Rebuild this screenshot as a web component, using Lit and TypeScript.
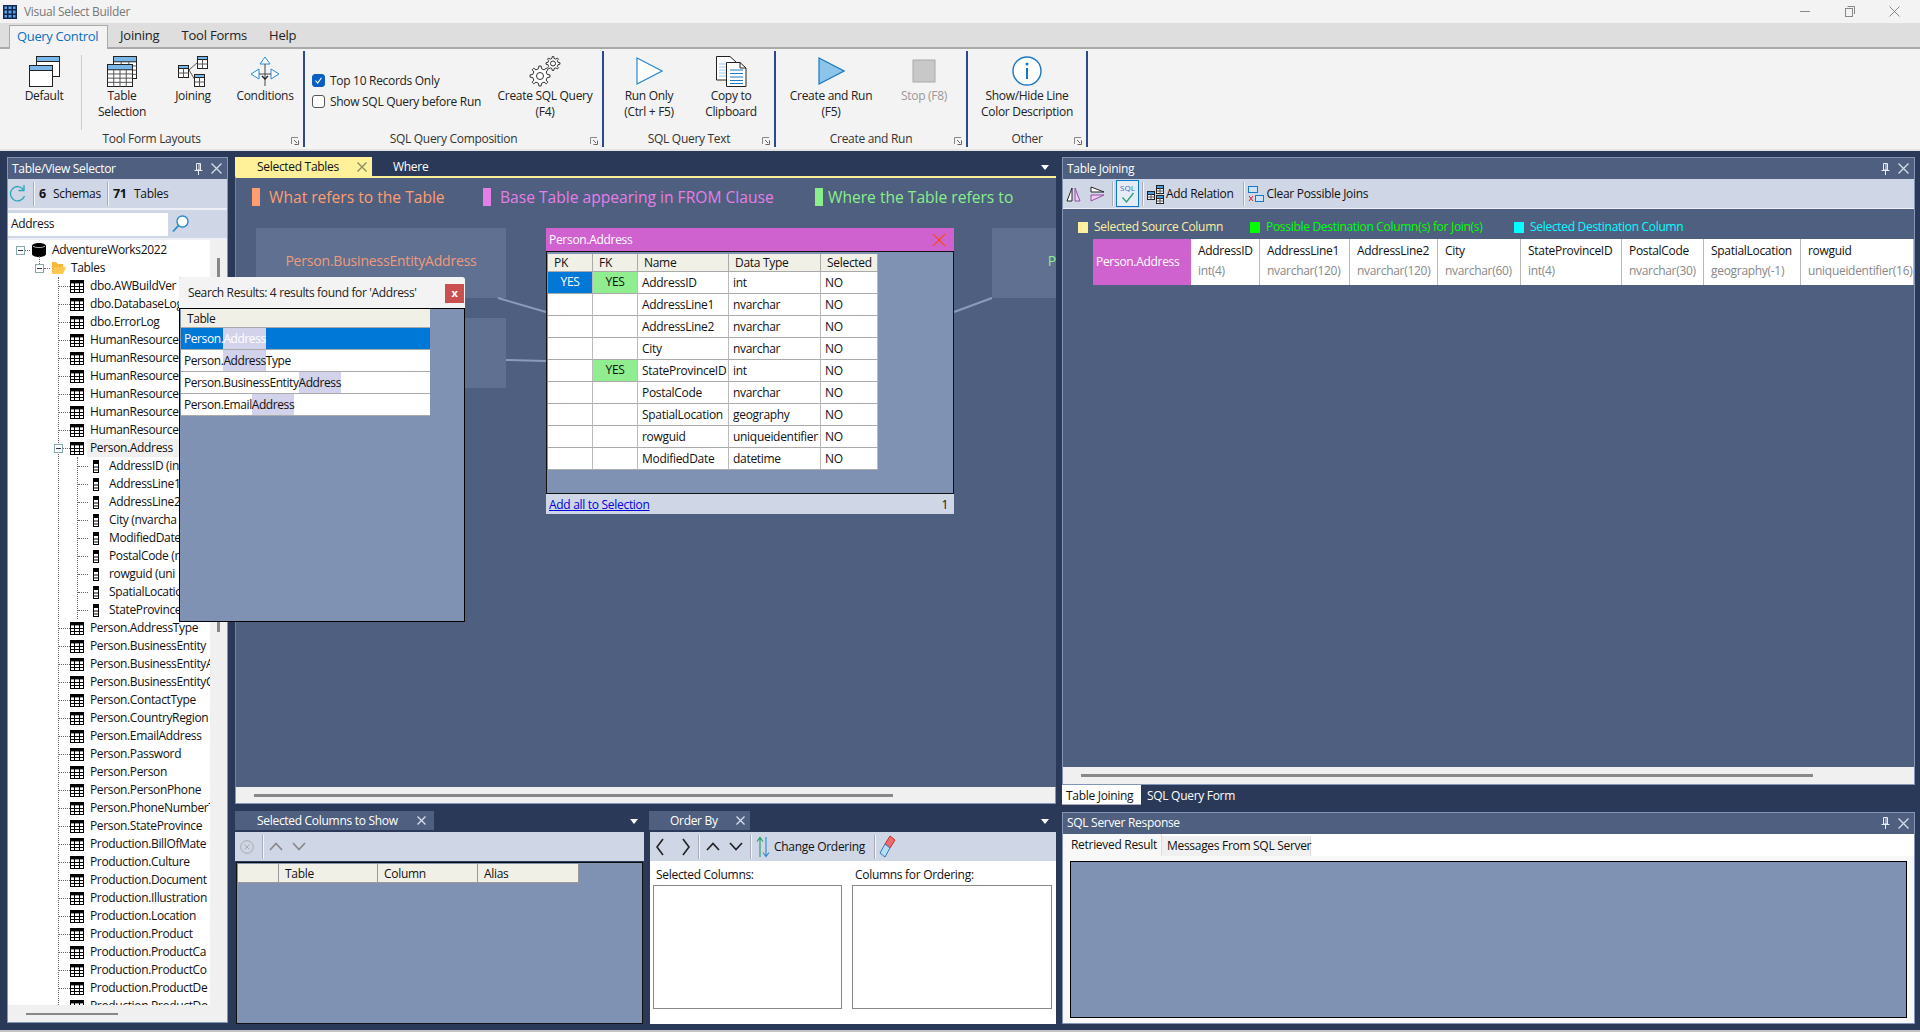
import { LitElement, html, svg, css } from "lit";
import { customElement } from "lit/decorators.js";

const gear = (cx: number, cy: number, r: number, n = 8) => {
  const pts: string[] = [];
  const step = (Math.PI * 2) / n;
  for (let i = 0; i < n; i++) {
    const a = i * step;
    const w = step * 0.2;
    const ri = r * 0.74;
    const p = (ang: number, rad: number) => `${(cx + Math.cos(ang) * rad).toFixed(2)} ${(cy + Math.sin(ang) * rad).toFixed(2)}`;
    pts.push(p(a - w * 1.3, ri), p(a - w * 0.7, r), p(a + w * 0.7, r), p(a + w * 1.3, ri));
  }
  return "M" + pts.join("L") + "Z";
};

const mini = (x: number, y: number, w: number, h: number, head = "#7ab6e8", cols = 2, rows = 2) => {
  const cw = w / cols;
  const hh = Math.max(3, h * 0.24);
  const rh = (h - hh) / rows;
  const lines: any[] = [];
  for (let i = 1; i < cols; i++) lines.push(svg`<path d="M${x + cw * i} ${y + hh}V${y + h}" stroke="#555" fill="none" />`);
  for (let i = 1; i < rows; i++) lines.push(svg`<path d="M${x} ${y + hh + rh * i}H${x + w}" stroke="#555" fill="none" />`);
  return svg`<rect x=${x} y=${y} width=${w} height=${h} fill="#fff" stroke="#222" /><rect x=${x} y=${y} width=${w} height=${hh} fill=${head} stroke="#222" />${lines}`;
};

const ico = (w: number, h: number, body: any) => html`<svg class="svg" width=${w} height=${h} viewBox="0 0 ${w} ${h}">${body}</svg>`;

const tableIcon = ico(14, 13, svg`<rect x=".5" y=".5" width="13" height="12" fill="#fff" stroke="#000" /><rect x="0" y="0" width="14" height="3.4" fill="#000" /><path d="M0 6.5H14M0 9.5H14M4.5 3V13M9.5 3V13" stroke="#000" fill="none" />`);
const colIcon = ico(6, 13, svg`<rect x=".5" y=".5" width="5" height="12" fill="#fff" stroke="#000" /><rect x="0" y="0" width="6" height="4" fill="#000" /><path d="M0 7H6M0 10H6" stroke="#000" fill="none" />`);
const dbIcon = ico(14, 14, svg`<path d="M0 3C0 -1 14 -1 14 3V11C14 15 0 15 0 11Z" fill="#000" /><path d="M1 3.2C3 5 11 5 13 3.2" stroke="#fff" fill="none" stroke-width=".7" />`);
const folderIcon = ico(15, 14, svg`<path d="M1 1H5L7 3H12V6H4L1 13Z" fill="#f5b73c" /><path d="M1 13L4 6H15L12 13Z" fill="#fcc74e" />`);
const pinIcon = ico(9, 12, svg`<path d="M2.5 .5H6.5V7H2.5ZM.5 7.5H8.5M4.5 8V12M5 1V7" stroke="#e8ecf4" fill="none" />`);
const closeIcon = (c = "#e8ecf4", s = 10) => ico(s, s, svg`<path d="M.5 .5L${s - 0.5} ${s - 0.5}M${s - 0.5} .5L.5 ${s - 0.5}" stroke=${c} stroke-width="1.3" fill="none" />`);
const launcher = ico(8, 8, svg`<path d="M.5 7V.5H7" stroke="#888" fill="none" /><path d="M3 3L6 6M7.5 3.5V7.5H3.5" stroke="#666" fill="none" />`);
const chevUp = (c: string) => ico(14, 9, svg`<path d="M1 8L7 1.5L13 8" stroke=${c} stroke-width="1.7" fill="none" />`);
const chevDown = (c: string) => ico(14, 9, svg`<path d="M1 1L7 7.5L13 1" stroke=${c} stroke-width="1.7" fill="none" />`);
const chevL = ico(9, 18, svg`<path d="M8 1L2 9L8 17" stroke="#222" stroke-width="1.6" fill="none" />`);
const chevR = ico(9, 18, svg`<path d="M1 1L7 9L1 17" stroke="#222" stroke-width="1.6" fill="none" />`);

const TABLES_A = ["dbo.AWBuildVer", "dbo.DatabaseLog", "dbo.ErrorLog", "HumanResource", "HumanResource", "HumanResource", "HumanResource", "HumanResource", "HumanResource"];
const COLS = ["AddressID (in", "AddressLine1", "AddressLine2", "City (nvarcha", "ModifiedDate", "PostalCode (r", "rowguid (uni", "SpatialLocatio", "StateProvince"];
const TABLES_B = ["Person.AddressType", "Person.BusinessEntity", "Person.BusinessEntityA", "Person.BusinessEntityC", "Person.ContactType", "Person.CountryRegion", "Person.EmailAddress", "Person.Password", "Person.Person", "Person.PersonPhone", "Person.PhoneNumberT", "Person.StateProvince", "Production.BillOfMate", "Production.Culture", "Production.Document", "Production.Illustration", "Production.Location", "Production.Product", "Production.ProductCa", "Production.ProductCo", "Production.ProductDe", "Production.ProductDo"];
const GRID = [
  ["YES", "YES", "AddressID", "int"],
  ["", "", "AddressLine1", "nvarchar"],
  ["", "", "AddressLine2", "nvarchar"],
  ["", "", "City", "nvarchar"],
  ["", "YES", "StateProvinceID", "int"],
  ["", "", "PostalCode", "nvarchar"],
  ["", "", "SpatialLocation", "geography"],
  ["", "", "rowguid", "uniqueidentifier"],
  ["", "", "ModifiedDate", "datetime"],
];
const JOIN = [["AddressID", "int(4)"], ["AddressLine1", "nvarchar(120)"], ["AddressLine2", "nvarchar(120)"], ["City", "nvarchar(60)"], ["StateProvinceID", "int(4)"], ["PostalCode", "nvarchar(30)"], ["SpatialLocation", "geography(-1)"], ["rowguid", "uniqueidentifier(16)"]];
const RESULTS = [["Person.", "Address", ""], ["Person.", "Address", "Type"], ["Person.BusinessEntity", "Address", ""], ["Person.Email", "Address", ""]];

@customElement("app-root")
export class AppRoot extends LitElement {
  static styles = css`
    :host { display: block; position: relative; width: 1920px; height: 1032px; overflow: hidden; background: #2a3957; font-family: "Open Sans", "Noto Sans", sans-serif; font-size: 12px; letter-spacing: -0.3px; color: #111; line-height: 16px; }
    * { box-sizing: border-box; }
    .svg { display: block; flex: none; }

    .title { height: 23px; background: #f3f3f3; display: flex; align-items: center; padding-left: 3px; color: #777; }
    .title .app { margin-right: 7px; }
    .winbtns { margin-left: auto; display: flex; padding-right: 3px; }
    .winbtns span { width: 45px; display: flex; justify-content: center; }

    .rtabs { height: 26px; background: #dedede; border-bottom: 2px solid #aaa; padding: 2px 0 0 9px; display: flex; font-size: 13px; letter-spacing: -0.2px; }
    .rtab { padding: 0 11px; height: 24px; line-height: 21px; color: #222; }
    .rtab.on { width: 99px; padding: 0 0 0 7px; background: #f3f3f3; border: 1px solid #aaa; border-bottom: none; color: #0a6fc2; margin-right: 1px; white-space: nowrap; letter-spacing: -0.35px; }

    .ribbon { height: 102px; background: #f3f3f3; border-bottom: 2px solid #e4e4e4; display: grid; grid-template-columns: 305px 299px 172px 192px 120px; padding-top: 2px; }
    .group { height: 96px; border-right: 2px solid #2a4a8a; display: flex; flex-direction: column; }
    .items { height: 79px; display: grid; }
    .g1 .items { grid-template-columns: 74px 1px 80px 62px 82px; padding-left: 7px; }
    .g2 .items { grid-template-columns: 178px 110px; padding-left: 7px; }
    .g3 .items { grid-template-columns: 90px 74px; }
    .g4 .items { grid-template-columns: 110px 76px; }
    .g5 .items { grid-template-columns: 118px; }
    .glabel { height: 17px; display: grid; grid-template-columns: 1fr auto 1fr; align-items: center; color: #333; }
    .glabel .svg { justify-self: end; margin-right: 4px; margin-top: 4px; grid-column: 3; }
    .glabel span { grid-column: 2; }
    .vsep { background: #ccc; height: 75px; margin-top: 4px; }
    .big { display: flex; flex-direction: column; align-items: center; padding-top: 5px; text-align: center; color: #222; white-space: pre-line; }
    .big .svg { margin-bottom: 1px; }
    .big.dis { color: #999; }
    .checks { padding-top: 19px; }
    .check { height: 21px; display: flex; align-items: center; gap: 5px; color: #222; }
    .box { width: 13px; height: 13px; border-radius: 3px; border: 1px solid #555; background: #fff; flex: none; }
    .box.on { background: #0a5fc0; border-color: #0a5fc0; display: flex; align-items: center; justify-content: center; }

    .work { display: grid; grid-template-columns: 221px 828px 859px; height: 879px; padding: 6px 0 0 7px; }
    .left { height: 866px; }
    .panel { border: 1px solid #8496b8; background: #4e5f80; display: flex; flex-direction: column; }
    .phead { height: 21px; background: #4e5f80; color: #fff; display: flex; align-items: center; padding: 0 5px 0 4px; flex: none; }
    .phead .pin { margin-left: auto; margin-right: 8px; }
    .tb { background: #cfd6e6; display: flex; align-items: center; flex: none; }
    .tdiv { width: 1px; background: #f5f6fa; box-shadow: -1px 0 0 #aab; height: 24px; flex: none; }

    .left .tb1 { padding-left: 1px; border-bottom: 2px solid #eef0f6; height: 31px; }
    .tb1 .tdiv { margin: 0 4px 0 8px; }
    .tb1 b { width: 14px; font-size: 12.5px; }
    .tb1 .n2 { width: 21px; }
    .tb1 .lab { width: 55px; }
    .tb1 .tdiv.d2 { margin: 0 4px 0 0; }
    .search { height: 30px; background: #cfd6e6; display: flex; align-items: center; flex: none; border-bottom: 2px solid #eef0f6; }
    .search .inp { width: 160px; height: 23px; background: #fff; padding-left: 3px; line-height: 22px; }
    .search .svg { margin-left: 4px; }

    .treewrap { flex: 1; display: flex; min-height: 0; background: #f0f0f0; }
    .tree { width: 202px; background: #fff; overflow: hidden; height: 766px; flex: none; padding: 1px 0 0 8px; letter-spacing: -0.35px; }
    .vtrack { flex: 1; position: relative; }
    .vthumb { width: 3px; height: 374px; background: #888; margin: 18px 0 0 7px; }
    .hscroll { height: 17px; background: #f0f0f0; padding-left: 18px; display: flex; align-items: center; flex: none; }
    .hthumb { height: 2px; background: #888; flex: none; }
    .row { height: 18px; display: flex; align-items: center; white-space: nowrap; }
    .exp { width: 9px; height: 9px; border: 1px solid #8aa; background: #fff; flex: none; position: relative; }
    .exp::after { content: ""; position: absolute; left: 1px; right: 1px; top: 3px; height: 1px; background: #334; }
    .dots { height: 0; border-bottom: 1px dotted #666; flex: none; }
    .r0 .dots { width: 5px; }
    .r0 .svg { margin-left: 2px; }
    .r0 .t { margin-left: 6px; }
    .r1 { margin-left: 19px; }
    .r1 .dots { width: 6px; }
    .r1 .svg { margin-left: 1px; }
    .r1 .t { margin-left: 5px; }
    .r1 .exp::before { content: ""; position: absolute; left: 3px; top: -9px; height: 8px; border-left: 1px dotted #666; }
    .l2 { margin-left: 42px; border-left: 1px dotted #666; }
    .l2 > .row > .dots { width: 11px; }
    .l2 > .row .t { margin-left: 3px; padding: 0 3px; line-height: 18px; }
    .l2 > .row.pa .exp { margin-left: -5px; }
    .l2 > .row.pa .dots { width: 7px; }
    .l2 > .row.pa .t { background: #f0f0f0; padding-right: 6px; }
    .l2 > .row.under .t { max-width: 92px; overflow: hidden; }
    .l3 { margin-left: 18px; border-left: 1px dotted #666; height: 162px; }
    .l3 .dots { width: 10px; }
    .l3 .svg { margin-left: 5px; }
    .l3 .t { margin-left: 10px; max-width: 70px; overflow: hidden; }

    .center { display: flex; flex-direction: column; margin-left: 7px; width: 821px; }
    .right { display: flex; flex-direction: column; margin-left: 6px; width: 853px; }
    .dtabs { height: 19px; display: flex; align-items: stretch; flex: none; }
    .dtab { display: flex; align-items: center; color: #fff; white-space: nowrap; }
    .dtab.y { background: #fff09a; color: #111; width: 137px; padding-left: 22px; }
    .dtab.y .svg { margin-left: 18px; }
    .dtab.where { padding-left: 21px; }
    .dtab.s { background: #4e5f80; }
    .dtab.sc { width: 199px; padding-left: 22px; }
    .dtab.sc .svg { margin-left: 19px; }
    .dtab.ob { width: 101px; padding-left: 21px; }
    .dtab.ob .svg { margin-left: 18px; }
    .tri { margin-left: auto; margin-right: 7px; align-self: center; width: 0; height: 0; border: 4px solid transparent; border-top: 5px solid #fff; margin-top: 5px; }
    .tri.wide { margin-right: 11px; }
    .canvas { position: relative; height: 611px; background: #4e5f80; overflow: hidden; border-top: 2px solid #fff09a; flex: none; border-left: 1px solid #6f81a3; }
    .lg { position: absolute; top: 10px; display: flex; align-items: center; gap: 9px; height: 18px; font-size: 15.6px; letter-spacing: 0; white-space: nowrap; }
    .lg .sw { width: 8px; height: 18px; flex: none; }
    .ghost { position: absolute; background: #5f7090; display: flex; align-items: center; justify-content: center; font-size: 14px; letter-spacing: -0.2px; overflow: hidden; white-space: nowrap; padding-bottom: 4px; }
    .wires { position: absolute; inset: 0; }
    .node { position: absolute; left: 310px; top: 50px; width: 408px; height: 286px; display: flex; flex-direction: column; }
    .ntitle { height: 23px; background: #cf62cf; color: #fff; display: flex; align-items: center; padding: 0 8px 0 3px; flex: none; justify-content: space-between; }
    .nbody { height: 243px; background: #8092b3; border: 1px solid #111; padding: 2px 0 0 1px; flex: none; }
    .nfoot { height: 20px; background: #cfd6e6; display: flex; align-items: center; padding: 1px 6px 0 3px; justify-content: space-between; flex: none; }
    .nfoot a { color: #0000e0; text-decoration: underline; }
    .dg { display: grid; grid-template-columns: 45px 45px 91px 92px 57px; width: 330px; }
    .dh { height: 18px; background: #f1f0e7; border-right: 1px solid #aaa; border-bottom: 1px solid #aaa; padding-left: 6px; line-height: 17px; white-space: nowrap; }
    .dc { height: 22px; background: #fff; border-right: 1px solid #bbb; border-bottom: 1px solid #aaa; padding-left: 4px; line-height: 21px; white-space: nowrap; overflow: hidden; }
    .dc.c { padding-left: 0; text-align: center; line-height: 19px; }
    .dc.pk { background: #0078d7; color: #fff; }
    .dc.fk { background: #90ee90; }

    .strip { height: 17px; background: #f0f0f0; padding-left: 18px; display: flex; align-items: center; flex: none; border: 1px solid #8496b8; border-top: none; }
    .bottomrow { display: flex; margin-top: 7px; height: 213px; }
    .bl { width: 414px; display: flex; flex-direction: column; }
    .br { width: 407px; display: flex; flex-direction: column; }
    .bl .tb2, .br .tb2 { height: 29px; margin-top: 2px; }
    .bl .tb2 { width: 409px; }
    .br .tb2 { width: 406px; margin-left: 1px; }
    .tb2 { padding-left: 5px; }
    .sgrid { margin: 1px 0 0 1px; width: 407px; height: 162px; border: 1px solid #111; background: #8092b3; padding: 1px 0 0 1px; }
    .sh { display: grid; grid-template-columns: 41px 99px 100px 101px; width: 341px; height: 19px; background: #f1f0e7; border-bottom: 1px solid #999; }
    .sh div { border-right: 1px solid #999; padding-left: 6px; line-height: 20px; }
    .obbody { margin-left: 1px; width: 406px; flex: 1; background: #fff; padding: 6px 3px 0 3px; display: grid; grid-template-columns: 189px 200px; column-gap: 10px; grid-template-rows: 18px 124px; align-content: start; color: #111; }
    .obbody .lab { padding-left: 3px; line-height: 16px; }
    .obbody .list { border: 1px solid #888; background: #fff; }

    .rbody { flex: 1; background: #4e5f80; overflow: hidden; }
    .jlegend { display: flex; height: 18px; margin: 9px 0 3px 15px; align-items: center; }
    .jl { display: flex; align-items: center; gap: 6px; white-space: nowrap; }
    .jl .sw { width: 10px; height: 11px; flex: none; }
    .jl.a { width: 172px; color: #fff0a0; } .jl.a .sw { background: #fff0a0; }
    .jl.b { width: 264px; color: #00ff00; } .jl.b .sw { background: #00ff00; }
    .jl.c { color: #00ffff; } .jl.c .sw { background: #00ffff; }
    .jg { margin-left: 30px; display: grid; grid-template-columns: 98px 69px 90px 88px 83px 101px 82px 97px 1fr; height: 44px; background: #fff; border-bottom: 1px solid #bbb; }
    .jg > div { border-right: 1px solid #bbb; background: #fff; padding-left: 7px; }
    .jg .base { background: #cf62cf; color: #fff; padding-left: 3px; line-height: 46px; border: none; }
    .jg .a { height: 22px; line-height: 24px; white-space: nowrap; }
    .jg .b { height: 21px; line-height: 20px; color: #888; white-space: nowrap; }
    .rstrip { height: 17px; background: #f0f0f0; padding-left: 18px; display: flex; align-items: center; flex: none; }
    .rtabsb { height: 20px; display: flex; flex: none; }
    .rtabsb .on { width: 79px; background: #fff; padding-left: 4px; line-height: 22px; border-bottom: 1px solid #aab; white-space: nowrap; }
    .rtabsb .off { padding-left: 5px; margin-left: 1px; color: #fff; line-height: 22px; }
    .resp { margin-top: 7px; height: 212px; display: flex; flex-direction: column; background: #f8f8f8; flex: none; }
    .resp .phead { padding-bottom: 1px; }
    .rt { height: 22px; background: #fff; display: flex; flex: none; align-items: flex-end; white-space: nowrap; }
    .rt .a { width: 99px; height: 22px; background: #f8f8f8; padding-left: 8px; line-height: 21px; border-right: 1px solid #ddd; }
    .rt .b { width: 149px; height: 20px; background: #f0f0f0; padding-left: 5px; line-height: 20px; border-right: 1px solid #ddd; }
    .box2 { margin: 5px 7px 0 7px; height: 157px; background: #8092b3; border: 1px solid #000; }

    .popup { position: absolute; left: 179px; top: 277px; width: 286px; height: 345px; background: #8092b3; border-radius: 3px 3px 0 0; display: flex; flex-direction: column; }
    .phd { height: 32px; background: #f3f3f3; border-bottom: 1px solid #000; display: flex; align-items: center; padding: 0 1px 0 9px; color: #222; flex: none; border-radius: 3px 3px 0 0; justify-content: space-between; letter-spacing: -0.36px; }
    .px { width: 19px; height: 19px; background: #c9504f; color: #fff; font-weight: 700; display: flex; align-items: center; justify-content: center; font-size: 11px; margin-top: 1px; }
    .pbody { flex: 1; border: 1px solid #000; border-top: none; padding-left: 1px; }
    .pt { width: 249px; letter-spacing: -0.42px; }
    .pth { height: 19px; background: #f1f0e7; border-bottom: 1px solid #aaa; padding-left: 6px; line-height: 19px; }
    .ptr { height: 22px; background: #fff; border-bottom: 1px solid #aaa; padding-left: 3px; line-height: 21px; white-space: nowrap; }
    .ptr.sel { background: #0078d7; color: #fff; }
    .hl { background: #d2d2ea; padding: 2px 0; }
    .foot { height: 2px; background: #c4c4c4; }
    .ml2 { margin-left: 2px; } .ml3 { margin-left: 3px; } .ml4 { margin-left: 4px; } .ml5 { margin-left: 5px; } .ml6 { margin-left: 6px; } .ml8 { margin-left: 8px; } .ml9 { margin-left: 9px; } .ml10 { margin-left: 10px; } .ml18 { margin-left: 18px; }
    .sqlbtn { width: 23px; height: 27px; border: 1px solid #0a78d0; background: #e6ecf6; margin-left: 2px; display: flex; flex-direction: column; align-items: center; font-size: 8px; line-height: 9px; color: #2a6fc0; letter-spacing: 0; padding-top: 2px; }
    .rtb { height: 30px; padding-left: 3px; border-bottom: 1px solid #eef0f6; }
    .pr { height: 628px; }
  `;

  private bigIcons = {
    def: ico(31, 31, svg`<rect x="7.5" y=".5" width="23" height="20" fill="#fff" stroke="#222" /><rect x="7.5" y=".5" width="23" height="5" fill="#7ab6e8" stroke="#222" /><rect x=".5" y="9.5" width="23" height="21" fill="#fff" stroke="#222" /><rect x=".5" y="9.5" width="23" height="5" fill="#7ab6e8" stroke="#222" />`),
    tsel: ico(31, 31, svg`${mini(6.5, 0.5, 23, 22, "#7ab6e8", 3, 4)}${mini(0.5, 8.5, 25, 22, "#7ab6e8", 4, 4)}`),
    join: ico(31, 31, svg`<path d="M11 14L20 6M11 14L17 24" stroke="#555" fill="none" />${mini(19.5, 0.5, 10, 12, "#7ab6e8", 2, 2)}${mini(0.5, 9.5, 10, 12, "#7ab6e8", 2, 2)}${mini(16.5, 18.5, 10, 12, "#7ab6e8", 2, 2)}`),
    cond: ico(30, 31, svg`<path d="M15 1L20 8H10Z" fill="#fff" stroke="#2a8ad0" /><path d="M1 18L9 13V23Z" fill="#fff" stroke="#2a8ad0" /><path d="M29 18L21 13V23Z" fill="#fff" stroke="#2a8ad0" /><path d="M15 8V30M9 18H21" stroke="#444" fill="none" /><path d="M12 20L15 23L18 20" stroke="#222" stroke-width="1.4" fill="none" />`),
    gears: ico(32, 31, svg`<path d=${gear(11, 20, 10, 8)} fill="#fff" stroke="#333" /><circle cx="11" cy="20" r="3.5" fill="#fff" stroke="#333" /><path d=${gear(24, 7.5, 7, 8)} fill="#fff" stroke="#333" /><circle cx="24" cy="7.5" r="2.5" fill="#fff" stroke="#333" />`),
    run: ico(27, 31, svg`<path d="M1 2L26 15L1 28Z" fill="#fff" stroke="#2a8ad0" stroke-width="1.2" />`),
    copy: ico(31, 31, svg`<path d="M.5 .5H14L20 6V24H.5Z" fill="#fff" stroke="#222" /><path d="M3 8H12M3 11H12M3 14H12M3 17H12M3 20H12" stroke="#9cc8ea" fill="none" /><path d="M10.5 6.5H24L30 12V30.5H10.5Z" fill="#fff" stroke="#222" /><path d="M24 6.5V12H30" fill="none" stroke="#222" /><path d="M14 14H27M14 17.5H27M14 21H27M14 24.5H27M14 27.5H27" stroke="#1a78c2" fill="none" />`),
    runf: ico(27, 31, svg`<path d="M1 2L26 15L1 28Z" fill="#8cc4ea" stroke="#1a78c2" stroke-width="1.2" />`),
    stop: ico(24, 31, svg`<rect x="1" y="4" width="22" height="22" fill="#c8c8c8" stroke="#aaa" />`),
    info: ico(30, 31, svg`<circle cx="15" cy="15" r="14" fill="#fff" stroke="#1a78c2" stroke-width="1.4" /><circle cx="15" cy="8" r="1.5" fill="#1a78c2" /><rect x="14" y="12" width="2" height="11" fill="#1a78c2" />`),
  };

  private big(icon: any, label: string, dis = false) {
    return html`<div class="big ${dis ? "dis" : ""}">${icon}<span>${label}</span></div>`;
  }
  private glabel(t: string) {
    return html`<div class="glabel"><span>${t}</span>${launcher}</div>`;
  }

  private ribbon() {
    const b = this.bigIcons;
    return html`<div class="ribbon">
      <div class="group g1"><div class="items">
        ${this.big(b.def, "Default")}<div class="vsep"></div>${this.big(b.tsel, "Table\nSelection")}${this.big(b.join, "Joining")}${this.big(b.cond, "Conditions")}
      </div>${this.glabel("Tool Form Layouts")}</div>
      <div class="group g2"><div class="items">
        <div class="checks">
          <div class="check"><span class="box on">${ico(9, 9, svg`<path d="M1.5 4.5L3.7 7L7.5 1.8" stroke="#fff" fill="none" stroke-width="1.1" />`)}</span>Top 10 Records Only</div>
          <div class="check"><span class="box"></span>Show SQL Query before Run</div>
        </div>
        ${this.big(b.gears, "Create SQL Query\n(F4)")}
      </div>${this.glabel("SQL Query Composition")}</div>
      <div class="group g3"><div class="items">
        ${this.big(b.run, "Run Only\n(Ctrl + F5)")}${this.big(b.copy, "Copy to\nClipboard")}
      </div>${this.glabel("SQL Query Text")}</div>
      <div class="group g4"><div class="items">
        ${this.big(b.runf, "Create and Run\n(F5)")}${this.big(b.stop, "Stop (F8)", true)}
      </div>${this.glabel("Create and Run")}</div>
      <div class="group g5"><div class="items">
        ${this.big(b.info, "Show/Hide Line\nColor Description")}
      </div>${this.glabel("Other")}</div>
    </div>`;
  }

  private phead(t: string) {
    return html`<div class="phead"><span>${t}</span><span class="pin">${pinIcon}</span>${closeIcon("#d8deea", 11)}</div>`;
  }

  private tree() {
    const tr = (under: boolean) => (n: string) => html`<div class="row ${under ? "under" : ""}"><span class="dots"></span>${tableIcon}<span class="t">${n}</span></div>`;
    return html`<div class="tree">
      <div class="row r0"><span class="exp"></span><span class="dots"></span>${dbIcon}<span class="t">AdventureWorks2022</span></div>
      <div class="row r1"><span class="exp"></span><span class="dots"></span>${folderIcon}<span class="t">Tables</span></div>
      <div class="l2">
        ${TABLES_A.map(tr(true))}
        <div class="row pa"><span class="exp"></span><span class="dots"></span>${tableIcon}<span class="t">Person.Address</span></div>
        <div class="l3">${COLS.map((c) => html`<div class="row"><span class="dots"></span>${colIcon}<span class="t">${c}</span></div>`)}</div>
        ${TABLES_B.map(tr(false))}
      </div>
    </div>`;
  }

  private leftPanel() {
    return html`<div class="panel left">
      ${this.phead("Table/View Selector")}
      <div class="tb tb1">
        ${ico(17, 20, svg`<path d="M14.5 5.5A7.2 7.2 0 1 0 15.5 12" stroke="#2aa5c0" stroke-width="1.3" fill="none" /><path d="M15 1V6.5H9.5" stroke="#2aa5c0" stroke-width="1.3" fill="none" />`)}
        <span class="tdiv"></span><b>6</b><span class="lab">Schemas</span><span class="tdiv d2"></span><b class="n2">71</b><span>Tables</span>
      </div>
      <div class="search"><div class="inp">Address</div>${ico(17, 18, svg`<circle cx="10.5" cy="6.5" r="5.5" fill="#fff" stroke="#2a8ad0" stroke-width="1.4" /><path d="M6.5 10.5L1 16.5" stroke="#2a8ad0" stroke-width="1.8" />`)}</div>
      <div class="treewrap">${this.tree()}<div class="vtrack"><div class="vthumb"></div></div></div>
      <div class="hscroll"><div class="hthumb" style="width:92px"></div></div>
    </div>`;
  }

  private centerPanel() {
    const legend = [
      { l: 16, c: "#ff9d70", t: "What refers to the Table" },
      { l: 247, c: "#e57ee6", t: "Base Table appearing in FROM Clause" },
      { l: 579, c: "#8aee8a", t: "Where the Table refers to", g: true },
    ];
    return html`<div class="center">
      <div class="dtabs">
        <div class="dtab y">Selected Tables${closeIcon("#8a8a60", 10)}</div>
        <div class="dtab where">Where</div>
        <span class="tri"></span>
      </div>
      <div class="canvas">
        <div class="ghost" style="left:20px;top:50px;width:250px;height:70px;color:#ef9a7d">Person.BusinessEntityAddress</div>
        <div class="ghost" style="left:20px;top:140px;width:250px;height:70px"></div>
        <div class="ghost" style="left:756px;top:50px;width:70px;height:70px;color:#8aee8a;justify-content:flex-end;padding-right:6px">P</div>
        <svg class="wires" width="821" height="609"><path d="M262 120L310 134M270 182L310 183M718 134L756 120" stroke="#8a9cbc" stroke-width="2" fill="none" /></svg>
        ${legend.map((g) => html`<div class="lg" style="left:${g.l}px;color:${g.c};gap:${g.g ? 5 : 9}px"><span class="sw" style="background:${g.c}"></span><span>${g.t}</span></div>`)}
        <div class="node">
          <div class="ntitle"><span>Person.Address</span>${ico(14, 14, svg`<path d="M1 1L13 13M13 1L1 13" stroke="#f24e1e" stroke-width="1.3" />`)}</div>
          <div class="nbody"><div class="dg">
            ${["PK", "FK", "Name", "Data Type", "Selected"].map((h) => html`<div class="dh">${h}</div>`)}
            ${GRID.map((r) => html`
              <div class="dc ${r[0] ? "c pk" : ""}">${r[0]}</div>
              <div class="dc ${r[1] ? "c fk" : ""}">${r[1]}</div>
              <div class="dc">${r[2]}</div><div class="dc">${r[3]}</div><div class="dc">NO</div>`)}
          </div></div>
          <div class="nfoot"><a>Add all to Selection</a><span>1</span></div>
        </div>
      </div>
      <div class="strip"><div class="hthumb" style="width:639px;height:3px"></div></div>
      <div class="bottomrow">
        <div class="bl">
          <div class="dtabs"><div class="dtab s sc">Selected Columns to Show${closeIcon("#d8deea", 9)}</div><span class="tri wide"></span></div>
          <div class="tb tb2">
            ${ico(14, 14, svg`<circle cx="7" cy="7" r="6.3" fill="none" stroke="#aaa" /><path d="M4.5 4.5L9.5 9.5M9.5 4.5L4.5 9.5" stroke="#aaa" />`)}
            <span class="tdiv ml9"></span><span class="ml5">${chevUp("#888")}</span><span class="ml9">${chevDown("#888")}</span>
          </div>
          <div class="sgrid"><div class="sh"><div></div><div>Table</div><div>Column</div><div>Alias</div></div></div>
        </div>
        <div class="br">
          <div class="dtabs"><div class="dtab s ob">Order By${closeIcon("#d8deea", 9)}</div><span class="tri"></span></div>
          <div class="tb tb2">
            ${chevL}<span class="ml18">${chevR}</span>
            <span class="tdiv ml8"></span><span class="ml6">${chevUp("#222")}</span><span class="ml9">${chevDown("#222")}</span>
            <span class="tdiv ml8"></span>
            <span class="ml4">${ico(14, 22, svg`<path d="M4 21V2M1 5.5L4 1.5L7 5.5" stroke="#1aa060" stroke-width="1.1" fill="none" /><path d="M10 1V20M7 16.5L10 20.5L13 16.5" stroke="#2a8ad0" stroke-width="1.1" fill="none" />`)}</span>
            <span class="ml4">Change Ordering</span>
            <span class="tdiv ml10"></span>
            <span class="ml3">${ico(17, 24, svg`<path d="M11 1L16 5L11 13L6 9Z" fill="#ef6a6a" stroke="#c03030" /><path d="M6 9L11 13L6 22L1 18Z" fill="#bcdcf4" stroke="#2a78c2" />`)}</span>
          </div>
          <div class="obbody"><div class="lab">Selected Columns:</div><div class="lab">Columns for Ordering:</div><div class="list"></div><div class="list"></div></div>
        </div>
      </div>
    </div>`;
  }

  private rightPanel() {
    return html`<div class="right">
      <div class="panel pr">
        ${this.phead("Table Joining")}
        <div class="tb rtb">
          ${ico(15, 16, svg`<path d="M6 2L1 15H6Z" fill="#fff" stroke="#222" /><path d="M9 2L14 15H9Z" fill="#e6d0ee" stroke="#9a4aa8" />`)}
          <span class="ml9">${ico(15, 16, svg`<path d="M1 1L14 6H1Z" fill="#fff" stroke="#222" /><path d="M1 9H14L1 15Z" fill="#e6d0ee" stroke="#9a4aa8" />`)}</span>
          <span class="tdiv ml8"></span>
          <span class="sqlbtn">SQL${ico(14, 12, svg`<path d="M1.5 5.5L5.5 10L12.5 1" stroke="#2aa070" stroke-width="1.3" fill="none" />`)}</span>
          <span class="tdiv ml4"></span>
          <span class="ml3">${ico(17, 20, svg`${mini(0.5, 7.5, 7, 8, "#4a9ad8")}${mini(9.5, 1.5, 7, 8, "#4a9ad8")}${mini(9.5, 11.5, 7, 8, "#4a9ad8")}`)}</span>
          <span class="ml2">Add Relation</span>
          <span class="tdiv ml10"></span>
          <span class="ml3">${ico(16, 18, svg`<rect x=".5" y="1.5" width="9" height="6" fill="#cfe3f6" stroke="#1a78c2" /><rect x="7.5" y="10.5" width="8" height="6" fill="#cfe3f6" stroke="#1a78c2" /><path d="M1 11L5 16M5 11L1 16" stroke="#d02020" />`)}</span>
          <span class="ml3">Clear Possible Joins</span>
        </div>
        <div class="rbody">
          <div class="jlegend">
            <div class="jl a"><span class="sw"></span>Selected Source Column</div>
            <div class="jl b"><span class="sw"></span>Possible Destination Column(s) for Join(s)</div>
            <div class="jl c"><span class="sw"></span>Selected Destination Column</div>
          </div>
          <div class="jg">
            <div class="base">Person.Address</div>
            ${JOIN.map((j) => html`<div><div class="a">${j[0]}</div><div class="b">${j[1]}</div></div>`)}
            <div></div>
          </div>
        </div>
        <div class="rstrip"><div class="hthumb" style="width:732px;height:3px"></div></div>
      </div>
      <div class="rtabsb"><div class="on">Table Joining</div><div class="off">SQL Query Form</div></div>
      <div class="panel resp">
        ${this.phead("SQL Server Response")}
        <div class="rt"><div class="a">Retrieved Result</div><div class="b">Messages From SQL Server</div></div>
        <div class="box2"></div>
      </div>
    </div>`;
  }

  render() {
    return html`
      <div class="title">
        <span class="app">${ico(14, 14, svg`<rect width="14" height="14" fill="#12244f" /><path d="M1.5 1.5H4V4H1.5ZM5.5 1.5H8.5V4H5.5ZM10 1.5H12.5V4H10ZM1.5 5.5H4V8.5H1.5ZM5.5 5.5H8.5V8.5H5.5ZM10 5.5H12.5V8.5H10ZM1.5 10H4V12.5H1.5ZM5.5 10H8.5V12.5H5.5ZM10 10H12.5V12.5H10Z" fill="#5aa4e6" />`)}</span>
        <span>Visual Select Builder</span>
        <div class="winbtns">
          <span>${ico(10, 10, svg`<path d="M0 5.5H10" stroke="#888" />`)}</span>
          <span>${ico(10, 11, svg`<rect x=".5" y="2.5" width="7" height="8" fill="none" stroke="#888" /><path d="M2.5 .5H9.5V8" fill="none" stroke="#888" />`)}</span>
          <span>${ico(11, 11, svg`<path d="M.5 .5L10.5 10.5M10.5 .5L.5 10.5" stroke="#888" />`)}</span>
        </div>
      </div>
      <div class="rtabs">
        <div class="rtab on">Query Control</div><div class="rtab">Joining</div><div class="rtab">Tool Forms</div><div class="rtab">Help</div>
      </div>
      ${this.ribbon()}
      <div class="work">
        ${this.leftPanel()}
        ${this.centerPanel()}
        ${this.rightPanel()}
      </div>
      <div class="foot"></div>
      <div class="popup">
        <div class="phd"><span>Search Results: 4 results found for 'Address'</span><span class="px">x</span></div>
        <div class="pbody"><div class="pt">
          <div class="pth">Table</div>
          ${RESULTS.map((r, i) => html`<div class="ptr ${i === 0 ? "sel" : ""}">${r[0]}<span class="hl">${r[1]}</span>${r[2]}</div>`)}
        </div></div>
      </div>
    `;
  }
}
